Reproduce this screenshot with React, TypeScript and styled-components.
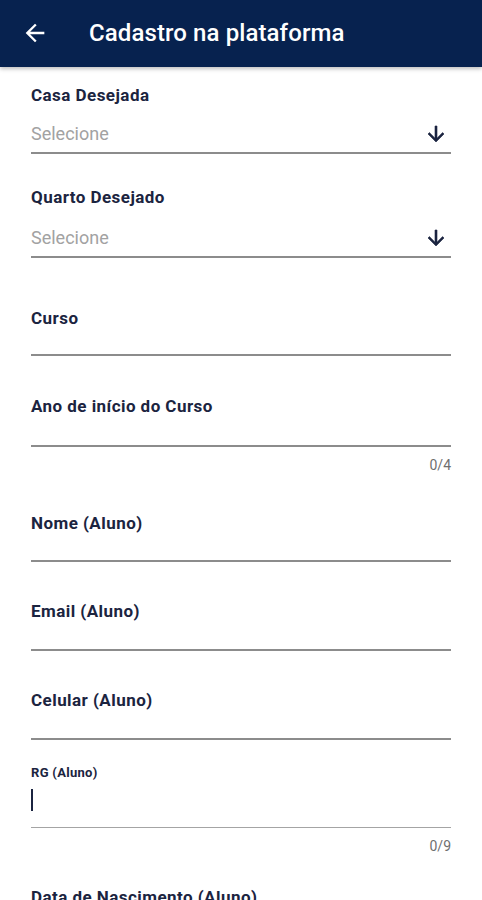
import React from "react";
import styled, { createGlobalStyle } from "styled-components";

const Global = createGlobalStyle`
  html, body { margin: 0; padding: 0; background: #ffffff; }
  body { font-family: Roboto, "Noto Sans", "Liberation Sans", sans-serif; overflow: hidden; }
  * { box-sizing: border-box; }
`;

const Page = styled.div`
  width: 482px;
  min-height: 900px;
  background: #fff;
`;

const AppBar = styled.header`
  height: 67px;
  background: #07224f;
  display: flex;
  align-items: center;
  padding-left: 21px;
  box-shadow: 0 2px 4px rgba(0, 0, 0, 0.25);
  position: relative;
  z-index: 1;
`;

const BackButton = styled.button`
  width: 28px;
  height: 28px;
  padding: 0;
  border: 0;
  background: transparent;
  display: flex;
  align-items: center;
  justify-content: center;
  color: #fff;
  margin-top: -1px;
`;

const Title = styled.h1`
  margin: -1px 0 0 40px;
  font-size: 24px;
  font-weight: 500;
  color: #ffffff;
  letter-spacing: 0.1px;
`;

const Form = styled.main`
  display: flex;
  flex-direction: column;
  padding: 0 31px;
`;

const Field = styled.div<{ $gap: number }>`
  display: flex;
  flex-direction: column;
  margin-top: ${(p) => p.$gap}px;
`;

const Label = styled.label<{ $small?: boolean }>`
  font-size: ${(p) => (p.$small ? 13 : 17)}px;
  line-height: ${(p) => (p.$small ? 14 : 20)}px;
  letter-spacing: ${(p) => (p.$small ? 0.3 : 0.45)}px;
  font-weight: 700;
  color: #1b2440;
  white-space: nowrap;
`;

const InputRow = styled.div<{ $h: number }>`
  height: ${(p) => p.$h}px;
  display: flex;
  align-items: flex-end;
  justify-content: space-between;
  padding-bottom: 8px;
  border-bottom: 2px solid #8c8c8c;
  box-sizing: content-box;
`;

const Placeholder = styled.span`
  font-size: 18px;
  line-height: 20px;
  color: #a2a2a2;
`;

const ArrowWrap = styled.span`
  display: flex;
  width: 24px;
  height: 24px;
  margin-right: 3px;
  margin-bottom: -2px;
  color: #1b2440;
`;

const CursorRow = styled.div`
  height: 48px;
  border-bottom: 1px solid #a4a4a4;
  padding-top: 9px;
`;

const Caret = styled.span`
  display: block;
  width: 2px;
  height: 22px;
  background: #1b2440;
`;

const Counter = styled.div`
  margin-top: 10px;
  text-align: right;
  font-size: 14px;
  line-height: 16px;
  color: #6f6f6f;
`;

const ArrowDown = () => (
  <ArrowWrap>
    <svg viewBox="0 0 24 24" width="24" height="24" fill="currentColor" stroke="currentColor" strokeWidth="0.6">
      <path d="M20 12l-1.41-1.41L13 16.17V4h-2v12.17l-5.58-5.59L4 12l8 8 8-8z" />
    </svg>
  </ArrowWrap>
);

type Def = {
  label: string;
  gap: number;
  kind: "select" | "text";
  h: number;
  counter?: string;
};

const fields: Def[] = [
  { label: "Casa Desejada", gap: 18, kind: "select", h: 39 },
  { label: "Quarto Desejado", gap: 33, kind: "select", h: 41 },
  { label: "Curso", gap: 50, kind: "text", h: 18 },
  { label: "Ano de início do Curso", gap: 40, kind: "text", h: 21, counter: "0/4" },
  { label: "Nome (Aluno)", gap: 40, kind: "text", h: 19 },
  { label: "Email (Aluno)", gap: 39, kind: "text", h: 20 },
  { label: "Celular (Aluno)", gap: 39, kind: "text", h: 20 },
];

export default function App() {
  return (
    <Page>
      <Global />
      <AppBar>
        <BackButton aria-label="Voltar">
          <svg viewBox="0 0 24 24" width="28" height="28" fill="currentColor">
            <path d="M20 11H7.83l5.59-5.59L12 4l-8 8 8 8 1.41-1.41L7.83 13H20v-2z" />
          </svg>
        </BackButton>
        <Title>Cadastro na plataforma</Title>
      </AppBar>
      <Form>
        {fields.map((f) => (
          <Field key={f.label} $gap={f.gap}>
            <Label>{f.label}</Label>
            <InputRow $h={f.h}>
              {f.kind === "select" && (
                <>
                  <Placeholder>Selecione</Placeholder>
                  <ArrowDown />
                </>
              )}
            </InputRow>
            {f.counter && <Counter>{f.counter}</Counter>}
          </Field>
        ))}
        <Field $gap={26}>
          <Label $small>RG (Aluno)</Label>
          <CursorRow>
            <Caret />
          </CursorRow>
          <Counter>0/9</Counter>
        </Field>
        <Field $gap={33}>
          <Label>Data de Nascimento (Aluno)</Label>
        </Field>
      </Form>
    </Page>
  );
}
